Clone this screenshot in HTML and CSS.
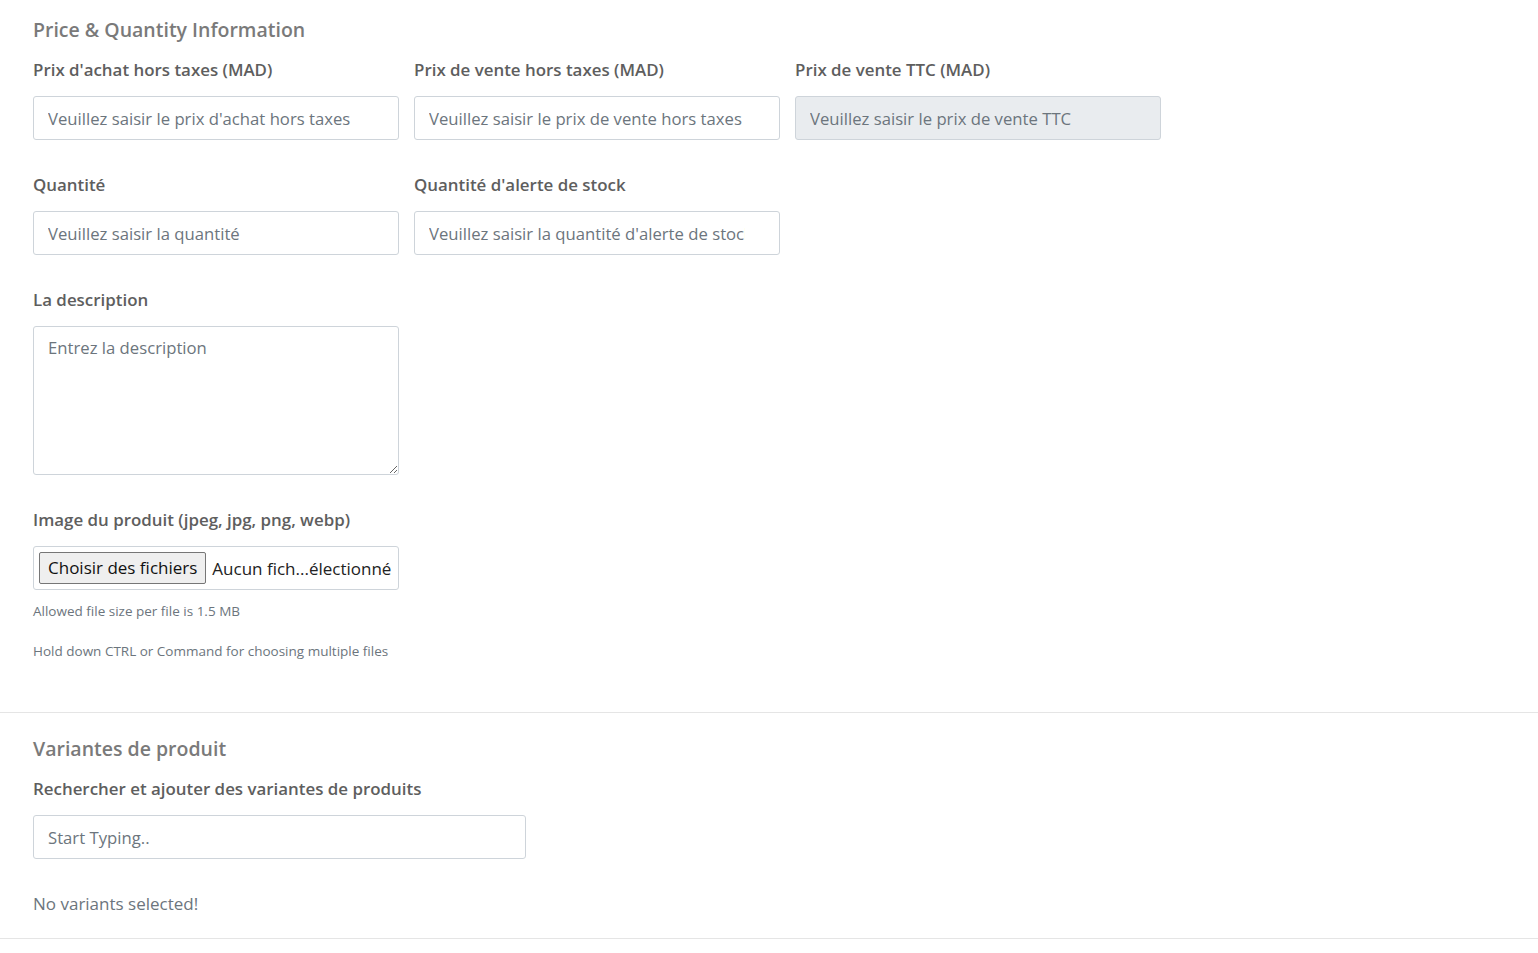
FILE: index.html
```html
<!DOCTYPE html>
<html>
<head>
  <title>Produit - Prix et variantes</title>
  <link rel="stylesheet" href="styles.css">
</head>
<body>
  <div class='section'>
    <h2 class='section-title'>Price &amp; Quantity Information</h2>
    <div class='row'>
      <div class='field'>
        <label class='field-label'>Prix d'achat hors taxes (MAD)</label>
        <input class='control' type='text' placeholder="Veuillez saisir le prix d'achat hors taxes">
      </div>
      <div class='field'>
        <label class='field-label'>Prix de vente hors taxes (MAD)</label>
        <input class='control' type='text' placeholder='Veuillez saisir le prix de vente hors taxes'>
      </div>
      <div class='field'>
        <label class='field-label'>Prix de vente TTC (MAD)</label>
        <input class='control' type='text' placeholder='Veuillez saisir le prix de vente TTC' disabled>
      </div>
    </div>
    <div class='row'>
      <div class='field'>
        <label class='field-label'>Quantité</label>
        <input class='control' type='text' placeholder='Veuillez saisir la quantité'>
      </div>
      <div class='field'>
        <label class='field-label'>Quantité d'alerte de stock</label>
        <input class='control' type='text' placeholder="Veuillez saisir la quantité d'alerte de stock">
      </div>
    </div>
    <div class='row'>
      <div class='field'>
        <label class='field-label'>La description</label>
        <textarea class='control textarea' placeholder='Entrez la description'></textarea>
      </div>
    </div>
    <div class='row'>
      <div class='field'>
        <label class='field-label'>Image du produit (jpeg, jpg, png, webp)</label>
        <div class='control file-control'>
          <span class='file-btn'>Choisir des fichiers</span>
          <span class='file-name'>Aucun fich...électionné</span>
        </div>
        <small class='help'>Allowed file size per file is 1.5 MB</small>
        <small class='help'>Hold down CTRL or Command for choosing multiple files</small>
      </div>
    </div>
  </div>

  <div class='section variants'>
    <h2 class='section-title'>Variantes de produit</h2>
    <div class='field wide'>
      <label class='field-label'>Rechercher et ajouter des variantes de produits</label>
      <input class='control' type='text' placeholder='Start Typing..'>
    </div>
    <p class='empty'>No variants selected!</p>
  </div>
</body>
</html>
```

FILE: styles.css
```css
body, html {
  margin: 0;
  padding: 0;
  background: #fff;
}
body {
  font-family: "Open Sans", "Noto Sans", sans-serif;
  color: #555;
}
.section {
  padding: 18px 33px 0 33px;
}
.section-title {
  margin: 0 0 16px 0;
  font-size: 19.5px;
  line-height: 24px;
  font-weight: 600;
  color: #7a7a7a;
}
.row {
  display: grid;
  grid-template-columns: 366px 366px 366px;
  column-gap: 15px;
}
.field {
  display: flex;
  flex-direction: column;
  margin-bottom: 33px;
}
.field-label {
  display: block;
  font-size: 16.9px;
  line-height: 24px;
  font-weight: 600;
  color: #5e5e5e;
  margin-bottom: 14px;
}
.control {
  box-sizing: border-box;
  width: 100%;
  height: 44px;
  padding: 0 34px 0 14px;
  border: 1px solid #ced4da;
  border-radius: 3px;
  background: #fff;
  font-family: inherit;
  font-size: 16.7px;
  color: #495057;
  outline: none;
}
.control::placeholder {
  color: #6c757d;
  opacity: 1;
}
.control:disabled {
  background: #e9ecef;
}
.textarea {
  height: 149px;
  padding-top: 9px;
  resize: vertical;
}
.file-control {
  display: flex;
  align-items: center;
  gap: 6px;
  padding: 0 5px;
  white-space: nowrap;
  overflow: hidden;
}
.file-btn {
  padding: 3px 8px;
  border: 1px solid #767676;
  border-radius: 2px;
  background: #efefef;
  color: #111;
  font-size: 17px;
  line-height: 24px;
}
.file-name {
  color: #222;
  font-size: 17px;
}
.help {
  display: block;
  font-size: 13.5px;
  line-height: 20px;
  color: #6c757d;
  margin-top: 11px;
}
.help + .help {
  margin-top: 20px;
}
.variants {
  border-top: 1px solid #e5e5e5;
  border-bottom: 1px solid #e5e5e5;
  margin-top: 18px;
  padding-top: 24px;
  padding-bottom: 22px;
}
.wide {
  width: 493px;
  margin-bottom: 33px;
}
.empty {
  margin: 0;
  font-size: 17px;
  line-height: 24px;
  color: #6c757d;
}
```
